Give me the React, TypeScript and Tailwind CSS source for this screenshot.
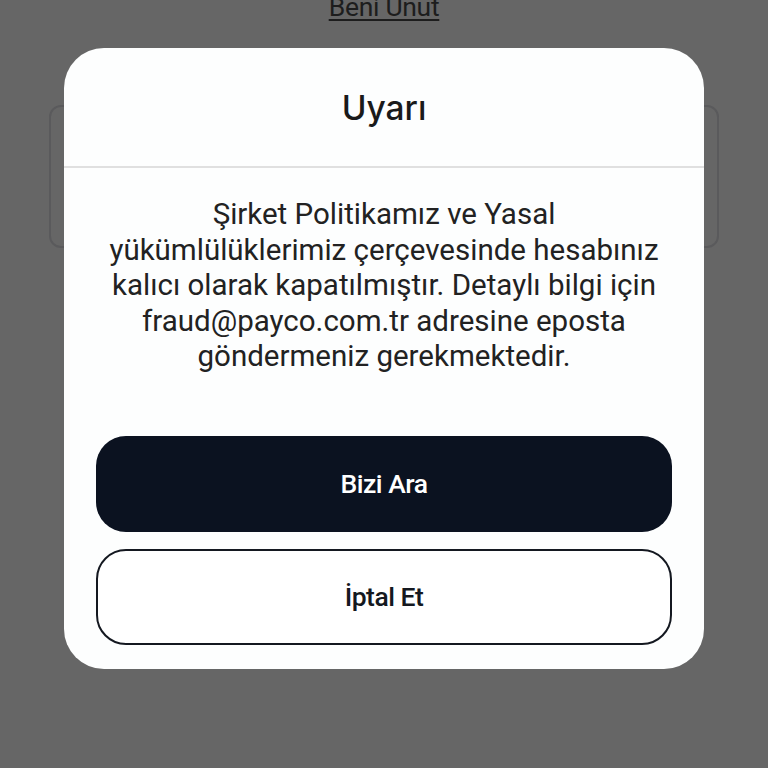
import React from "react";

export default function App() {
    return (
        <div
            className="relative w-[768px] h-[768px] overflow-hidden bg-[#666666]"
            style={{ fontFamily: "Roboto, 'Noto Sans', sans-serif" }}
        >
            {/* Background page (dimmed) */}
            <div className="flex flex-col items-center">
                <a className="-mt-[8px] text-[26.5px] leading-[30px] text-[#1d1d1d] underline underline-offset-[3px] decoration-[1.5px] tracking-[-0.3px]">
                    Beni Unut
                </a>
                <div className="mt-[83px] w-[670px] h-[143px] rounded-[12px] border-2 border-[#5a5a5c]" />
            </div>

            {/* Dialog */}
            <div className="absolute left-[64px] top-[48px] w-[640px] h-[621px] rounded-[40px] bg-[#fdfefe] flex flex-col">
                <div className="h-[120px] flex items-center justify-center border-b-2 border-[#e0e0e0]">
                    <h2
                        className="text-[33.5px] font-medium text-[#1a1a1a] pt-[2px]"
                        style={{ fontFamily: "Inter, sans-serif" }}
                    >
                        Uyarı
                    </h2>
                </div>
                <p className="mt-[29px] text-center text-[29.5px] leading-[35.5px] text-[#222222]">
                    Şirket Politikamız ve Yasal<br />
                    yükümlülüklerimiz çerçevesinde hesabınız<br />
                    kalıcı olarak kapatılmıştır. Detaylı bilgi için<br />
                    fraud@payco.com.tr adresine eposta<br />
                    göndermeniz gerekmektedir.
                </p>
                <div className="mt-auto px-[32px] pb-[24px] flex flex-col gap-[17px]">
                    <button className="h-[96px] rounded-[30px] bg-[#0b1220] text-white text-[26.5px] font-medium tracking-[-0.5px]">
                        Bizi Ara
                    </button>
                    <button className="h-[96px] rounded-[30px] border-2 border-[#141820] bg-white text-[#141820] text-[26.5px] font-medium tracking-[-0.5px]">
                        İptal Et
                    </button>
                </div>
            </div>
        </div>
    );
}
